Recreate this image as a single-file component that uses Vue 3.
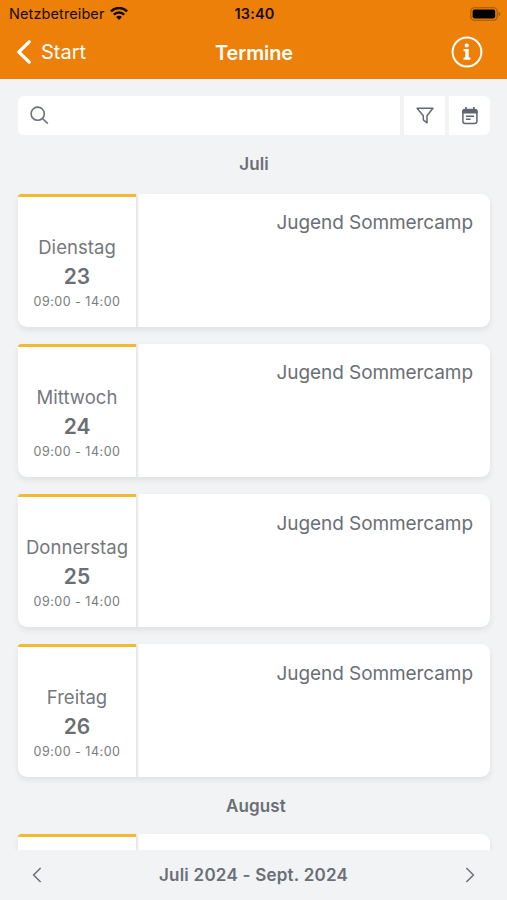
<template>
  <div class="screen">
    <header class="header">
      <div class="status">
        <div class="carrier">
          <span>Netzbetreiber</span>
          <svg width="18" height="14" viewBox="0 0 18 14" fill="none" stroke="#160b00">
            <path d="M0.9 4.4C5.4 -.1 12.6 -.1 17.1 4.4" stroke-width="2.5" />
            <path d="M3.8 7.6C6.7 4.7 11.3 4.7 14.2 7.6" stroke-width="2.4" />
            <path d="M6.1 10C7.7 8.4 10.3 8.4 11.9 10L9 12.9Z" fill="#160b00" stroke="none" />
          </svg>
        </div>
        <span class="clock">13:40</span>
        <svg class="battery" width="31" height="14" viewBox="0 0 31 14">
          <rect x=".8" y=".8" width="26.4" height="12.4" rx="3.6" fill="none" stroke="#9c5708" stroke-width="1.1" />
          <rect x="2.6" y="2.6" width="22.6" height="8.8" rx="1.8" fill="#000" />
          <path d="M28.6 4.7C30.6 5.4 30.6 8.6 28.6 9.3Z" fill="#9c5708" />
        </svg>
      </div>
      <nav class="nav">
        <a class="back">
          <svg width="15" height="24" viewBox="0 0 15 24" fill="none" stroke="#fff" stroke-width="3.2">
            <path d="M13.2 1.8L2.8 12L13.2 22.2" stroke-linecap="round" stroke-linejoin="round" />
          </svg>
          <span>Start</span>
        </a>
        <h1 class="title">Termine</h1>
        <svg class="info" width="32" height="32" viewBox="0 0 32 32">
          <circle cx="16" cy="16" r="14.4" fill="none" stroke="#fff" stroke-width="2" />
          <circle cx="15.7" cy="9.5" r="2.1" fill="#fff" />
          <path d="M12.6 13H17.7V21.6H19.4V23.8H12.6V21.6H14.3V15.2H12.6Z" fill="#fff" />
        </svg>
      </nav>
    </header>

    <main class="content">
      <div class="toolbar">
        <div class="search">
          <svg width="19" height="19" viewBox="0 0 19 19" fill="none" stroke="#6c727a" stroke-width="1.6">
            <circle cx="7.7" cy="7.7" r="6.6" />
            <path d="M12.5 12.5L17.8 17.6" />
          </svg>
        </div>
        <button class="tool">
          <svg width="18" height="17" viewBox="0 0 18 17" fill="none" stroke="#636975" stroke-width="1.5" stroke-linejoin="round">
            <path d="M1.1 1.3H16.9L11 8.8V15.8L7.3 12.9V8.8Z" />
          </svg>
        </button>
        <button class="tool">
          <svg width="16" height="18" viewBox="0 0 16 18">
            <rect x=".9" y="2.6" width="14" height="13.9" rx="2.2" fill="none" stroke="#5f6571" stroke-width="1.5" />
            <path d="M.2 6.6V4.2Q.2 1.9 2.5 1.9H13.3Q15.6 1.9 15.6 4.2V6.6Z" fill="#5f6571" />
            <path d="M3.9 0V3M11.9 0V3" stroke="#5f6571" stroke-width="1.7" />
            <path d="M3.9 9.3H12M3.9 12.3H8.6" stroke="#5f6571" stroke-width="1.5" />
          </svg>
        </button>
      </div>

      <section v-for="group in groups" :key="group.month" class="group">
        <h2 class="month">{{ group.month }}</h2>
        <div class="cards">
          <article v-for="event in group.events" :key="event.day" class="card">
            <div class="date">
              <span class="weekday">{{ event.weekday }}</span>
              <span class="day">{{ event.day }}</span>
              <span class="time">{{ event.time }}</span>
            </div>
            <div class="name">{{ event.name }}</div>
          </article>
        </div>
      </section>
    </main>

    <footer class="footer">
      <svg width="10" height="16" viewBox="0 0 10 16" fill="none" stroke="#6c7177" stroke-width="1.5">
        <path d="M8.6 1L1.6 8L8.6 15" />
      </svg>
      <span>Juli 2024 - Sept. 2024</span>
      <svg width="10" height="16" viewBox="0 0 10 16" fill="none" stroke="#6c7177" stroke-width="1.5">
        <path d="M1.4 1L8.4 8L1.4 15" />
      </svg>
    </footer>
  </div>
</template>

<script setup>
const camp = (weekday, day) => ({ weekday, day, time: '09:00 - 14:00', name: 'Jugend Sommercamp' })

const groups = [
  {
    month: 'Juli',
    events: [
      camp('Dienstag', 23),
      camp('Mittwoch', 24),
      camp('Donnerstag', 25),
      camp('Freitag', 26),
    ],
  },
  // Nur die Oberkante der ersten Karte ist über der Fußleiste zu sehen
  { month: 'August', events: [{}] },
]
</script>

<style>
body { margin: 0; background: #f1f3f5; }
</style>

<style scoped>
.screen {
  display: flex; flex-direction: column;
  width: 507px; height: 900px; overflow: hidden;
  background: #f1f3f5; color: #6b6f75;
  font-family: Inter, 'Liberation Sans', sans-serif;
}

/* Kopfbereich */
.header { flex: none; height: 79px; background: #ed8008; }
.status {
  display: grid; grid-template-columns: 1fr auto 1fr; align-items: center;
  height: 27px; padding: 0 6px 0 8px;
  font-size: 14.5px; color: #160b00;
}
.carrier { display: flex; align-items: center; gap: 6px; padding-left: 1px; letter-spacing: 0.1px; }
.clock { font-weight: 600; letter-spacing: 0.2px; }
.battery { justify-self: end; }

.nav {
  display: grid; grid-template-columns: 1fr auto 1fr; align-items: center;
  height: 50px; padding: 0 16px;
  color: #fff;
}
.back { display: flex; align-items: center; gap: 10px; font-size: 20px; }
.title { margin: 0; padding: 1px 0 0 1px; font-size: 20px; font-weight: 600; letter-spacing: -0.15px; }
.info { justify-self: end; margin-right: 8px; }

/* Inhalt */
.content { flex: 1; min-height: 0; overflow: hidden; padding: 17px 17px 0 18px; }
.toolbar { display: flex; gap: 4px; height: 39px; }
.search {
  flex: 1; display: flex; align-items: center;
  padding-left: 12px; background: #fff; border-radius: 6px 0 0 6px;
}
.tool {
  display: flex; align-items: center; justify-content: center;
  width: 41px; padding: 0; border: 0; background: #fff;
}
.tool:last-child { border-radius: 0 6px 6px 0; }

.month {
  margin: 0; height: 58.6px; line-height: 58px;
  text-align: center; font-size: 17px; font-weight: 600; letter-spacing: 0.1px;
}
.group + .group .month { height: 56.4px; padding-left: 4px; }
.cards { display: flex; flex-direction: column; gap: 17.3px; }
.card {
  display: flex; height: 133px; overflow: hidden;
  background: #fff; border-radius: 3px 9px 9px 9px;
  box-shadow: 0 3px 6px rgba(0, 0, 0, 0.08);
}
.date {
  box-sizing: border-box; width: 118px;
  display: flex; flex-direction: column; align-items: center;
  padding-top: 36px; border-top: 3px solid #f4b931;
  box-shadow: 1px 0 2px 1px #e3e5e7;
}
.weekday { font-size: 18.5px; line-height: 28px; letter-spacing: 0.05px; color: #74787d; }
.day { font-size: 21px; line-height: 31px; font-weight: 600; }
.time { font-size: 12.5px; line-height: 20px; letter-spacing: 0.5px; color: #787c81; }
.name {
  flex: 1; padding: 16.5px 17px 0 0;
  text-align: right; font-size: 19px; line-height: 26px; letter-spacing: -0.08px;
}

/* Fußleiste */
.footer {
  flex: none; display: flex; align-items: center; justify-content: space-between;
  height: 50px; padding: 0 32px; box-sizing: border-box;
  font-size: 17px; font-weight: 600; letter-spacing: 0.24px;
}
</style>
